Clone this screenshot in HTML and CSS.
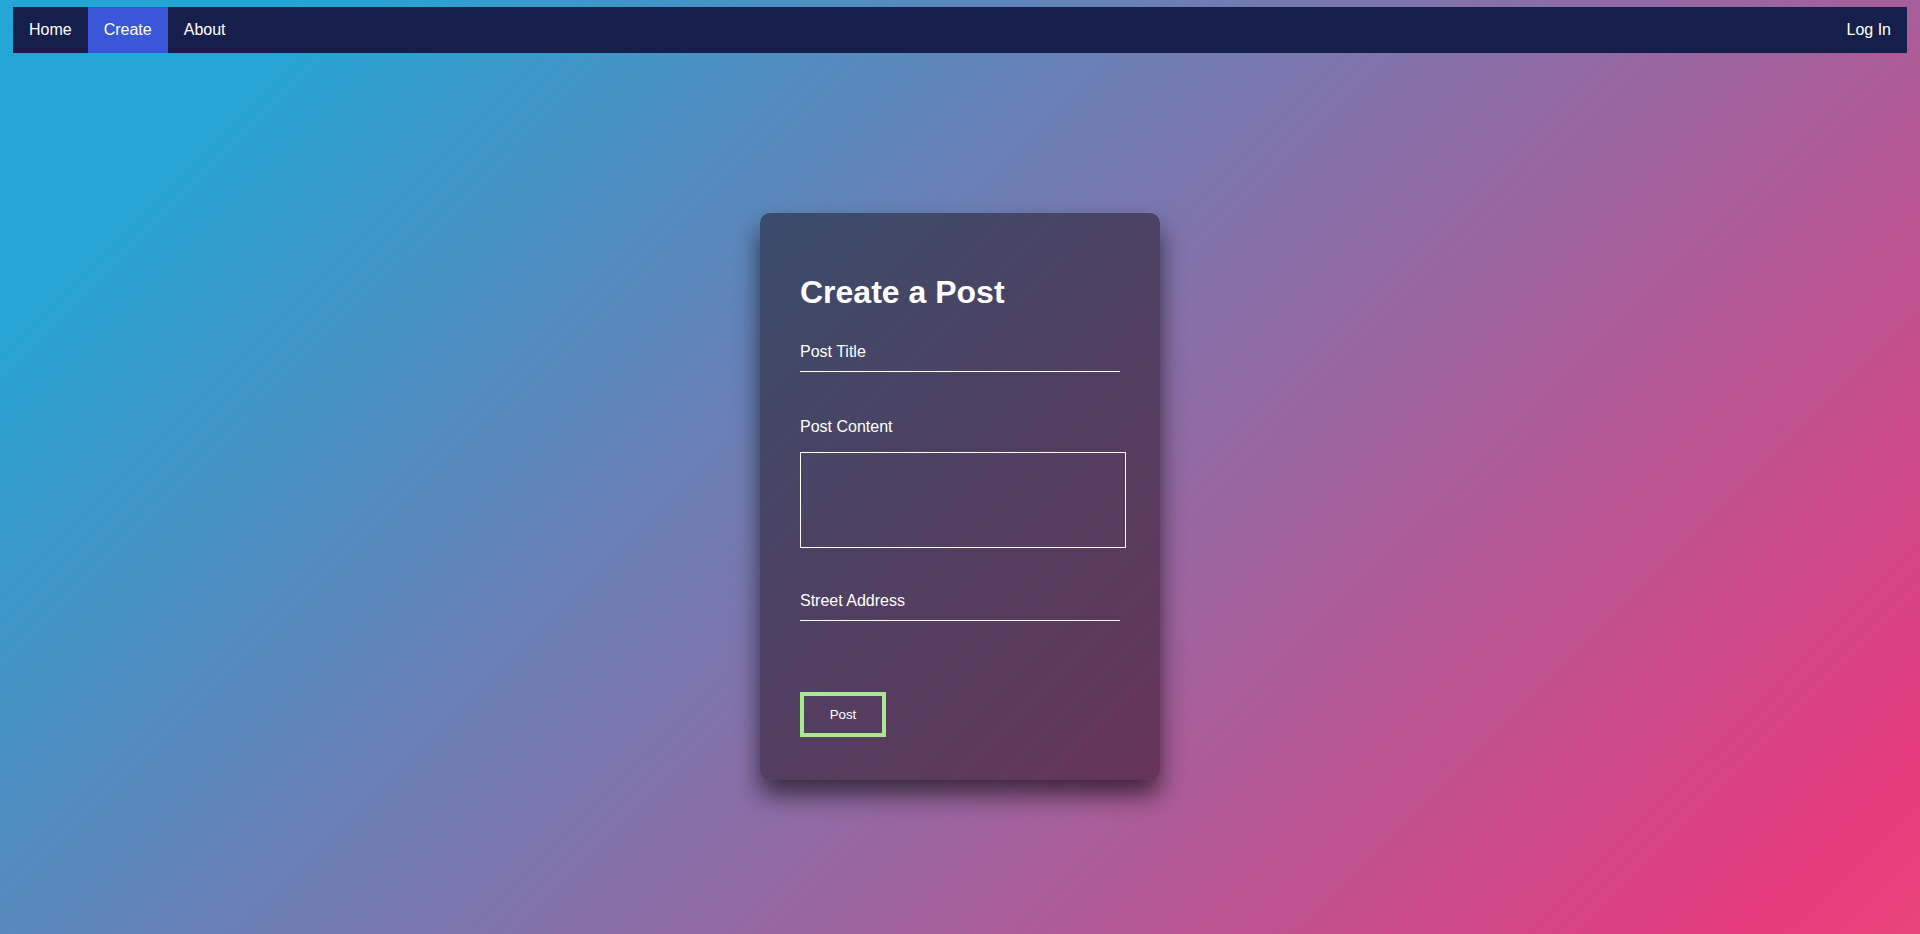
FILE: index.html
```html
<!DOCTYPE html>
<html lang="en">
<head>
  <meta charset="UTF-8">
  <meta name="viewport" content="width=device-width, initial-scale=1.0">
  <title>Create a Post</title>
  <link rel="stylesheet" href="styles.css">
</head>
<body>
  <nav class="topnav">
    <a href="#">Home</a>
    <a href="#" class="active">Create</a>
    <a href="#">About</a>
    <a href="#" class="login">Log In</a>
  </nav>

  <div class="page">
    <section class="post-box">
      <h1>Create a Post</h1>
      <form id="postForm" class="post-form">
        <input type="text" id="title" name="title" placeholder="Post Title" required>

        <p class="field-label">Post Content</p>
        <textarea id="content" name="content"></textarea>

        <input type="text" id="address" name="address" placeholder="Street Address" required>

        <button type="button" id="postButton">Post</button>
      </form>
    </section>
  </div>
</body>
</html>
```

FILE: styles.css
```css
/* styles.css */

body {
  margin: 0;
  min-height: 100vh;
  font-family: "Liberation Sans", Arial, sans-serif;
  color: #fff;
  background: linear-gradient(135deg, #23a6d5 10%, #e73c7e 94%, #e9447a 100%);
}

.topnav {
  display: flex;
  margin: 7px 13px 0;
  background-color: #161f4c;
}

.topnav a {
  padding: 14px 16px;
  font-size: 16px;
  line-height: 18px;
  color: #fff;
  text-decoration: none;
}

.topnav a.active {
  background-color: #3a56d9;
}

.topnav a.login {
  margin-left: auto;
}

.page {
  display: flex;
  justify-content: center;
  padding-top: 160px;
}

.post-box {
  width: 400px;
  box-sizing: border-box;
  padding: 40px 40px 43px;
  background: rgba(16, 0, 4, 0.44);
  border-radius: 10px;
  box-shadow: 0 15px 25px rgba(0, 0, 0, 0.6);
}

.post-box h1 {
  margin: 0.67em 0;
  font-size: 32px;
}

.post-form {
  display: flex;
  flex-direction: column;
}

.post-form input {
  width: 100%;
  box-sizing: border-box;
  padding: 10px 0;
  margin: 0 0 30px;
  font-family: inherit;
  font-size: 16px;
  line-height: normal;
  color: #fff;
  background: transparent;
  border: none;
  border-bottom: 1px solid #fff;
  outline: none;
}

.post-form input::placeholder {
  color: #fff;
  opacity: 1;
}

.field-label {
  margin: 16px 0;
  font-size: 16px;
}

.post-form textarea {
  width: 326px;
  height: 96px;
  box-sizing: border-box;
  margin: 0 0 34px;
  padding: 2px;
  font-family: inherit;
  color: #fff;
  background: transparent;
  border: 1px solid #fff;
  resize: none;
  outline: none;
}

.post-form button {
  align-self: flex-start;
  width: 86px;
  height: 45px;
  margin-top: 41px;
  font-family: inherit;
  font-size: 13.33px;
  color: #fff;
  background: transparent;
  border: 4px solid #a8e890;
  cursor: pointer;
}
```
